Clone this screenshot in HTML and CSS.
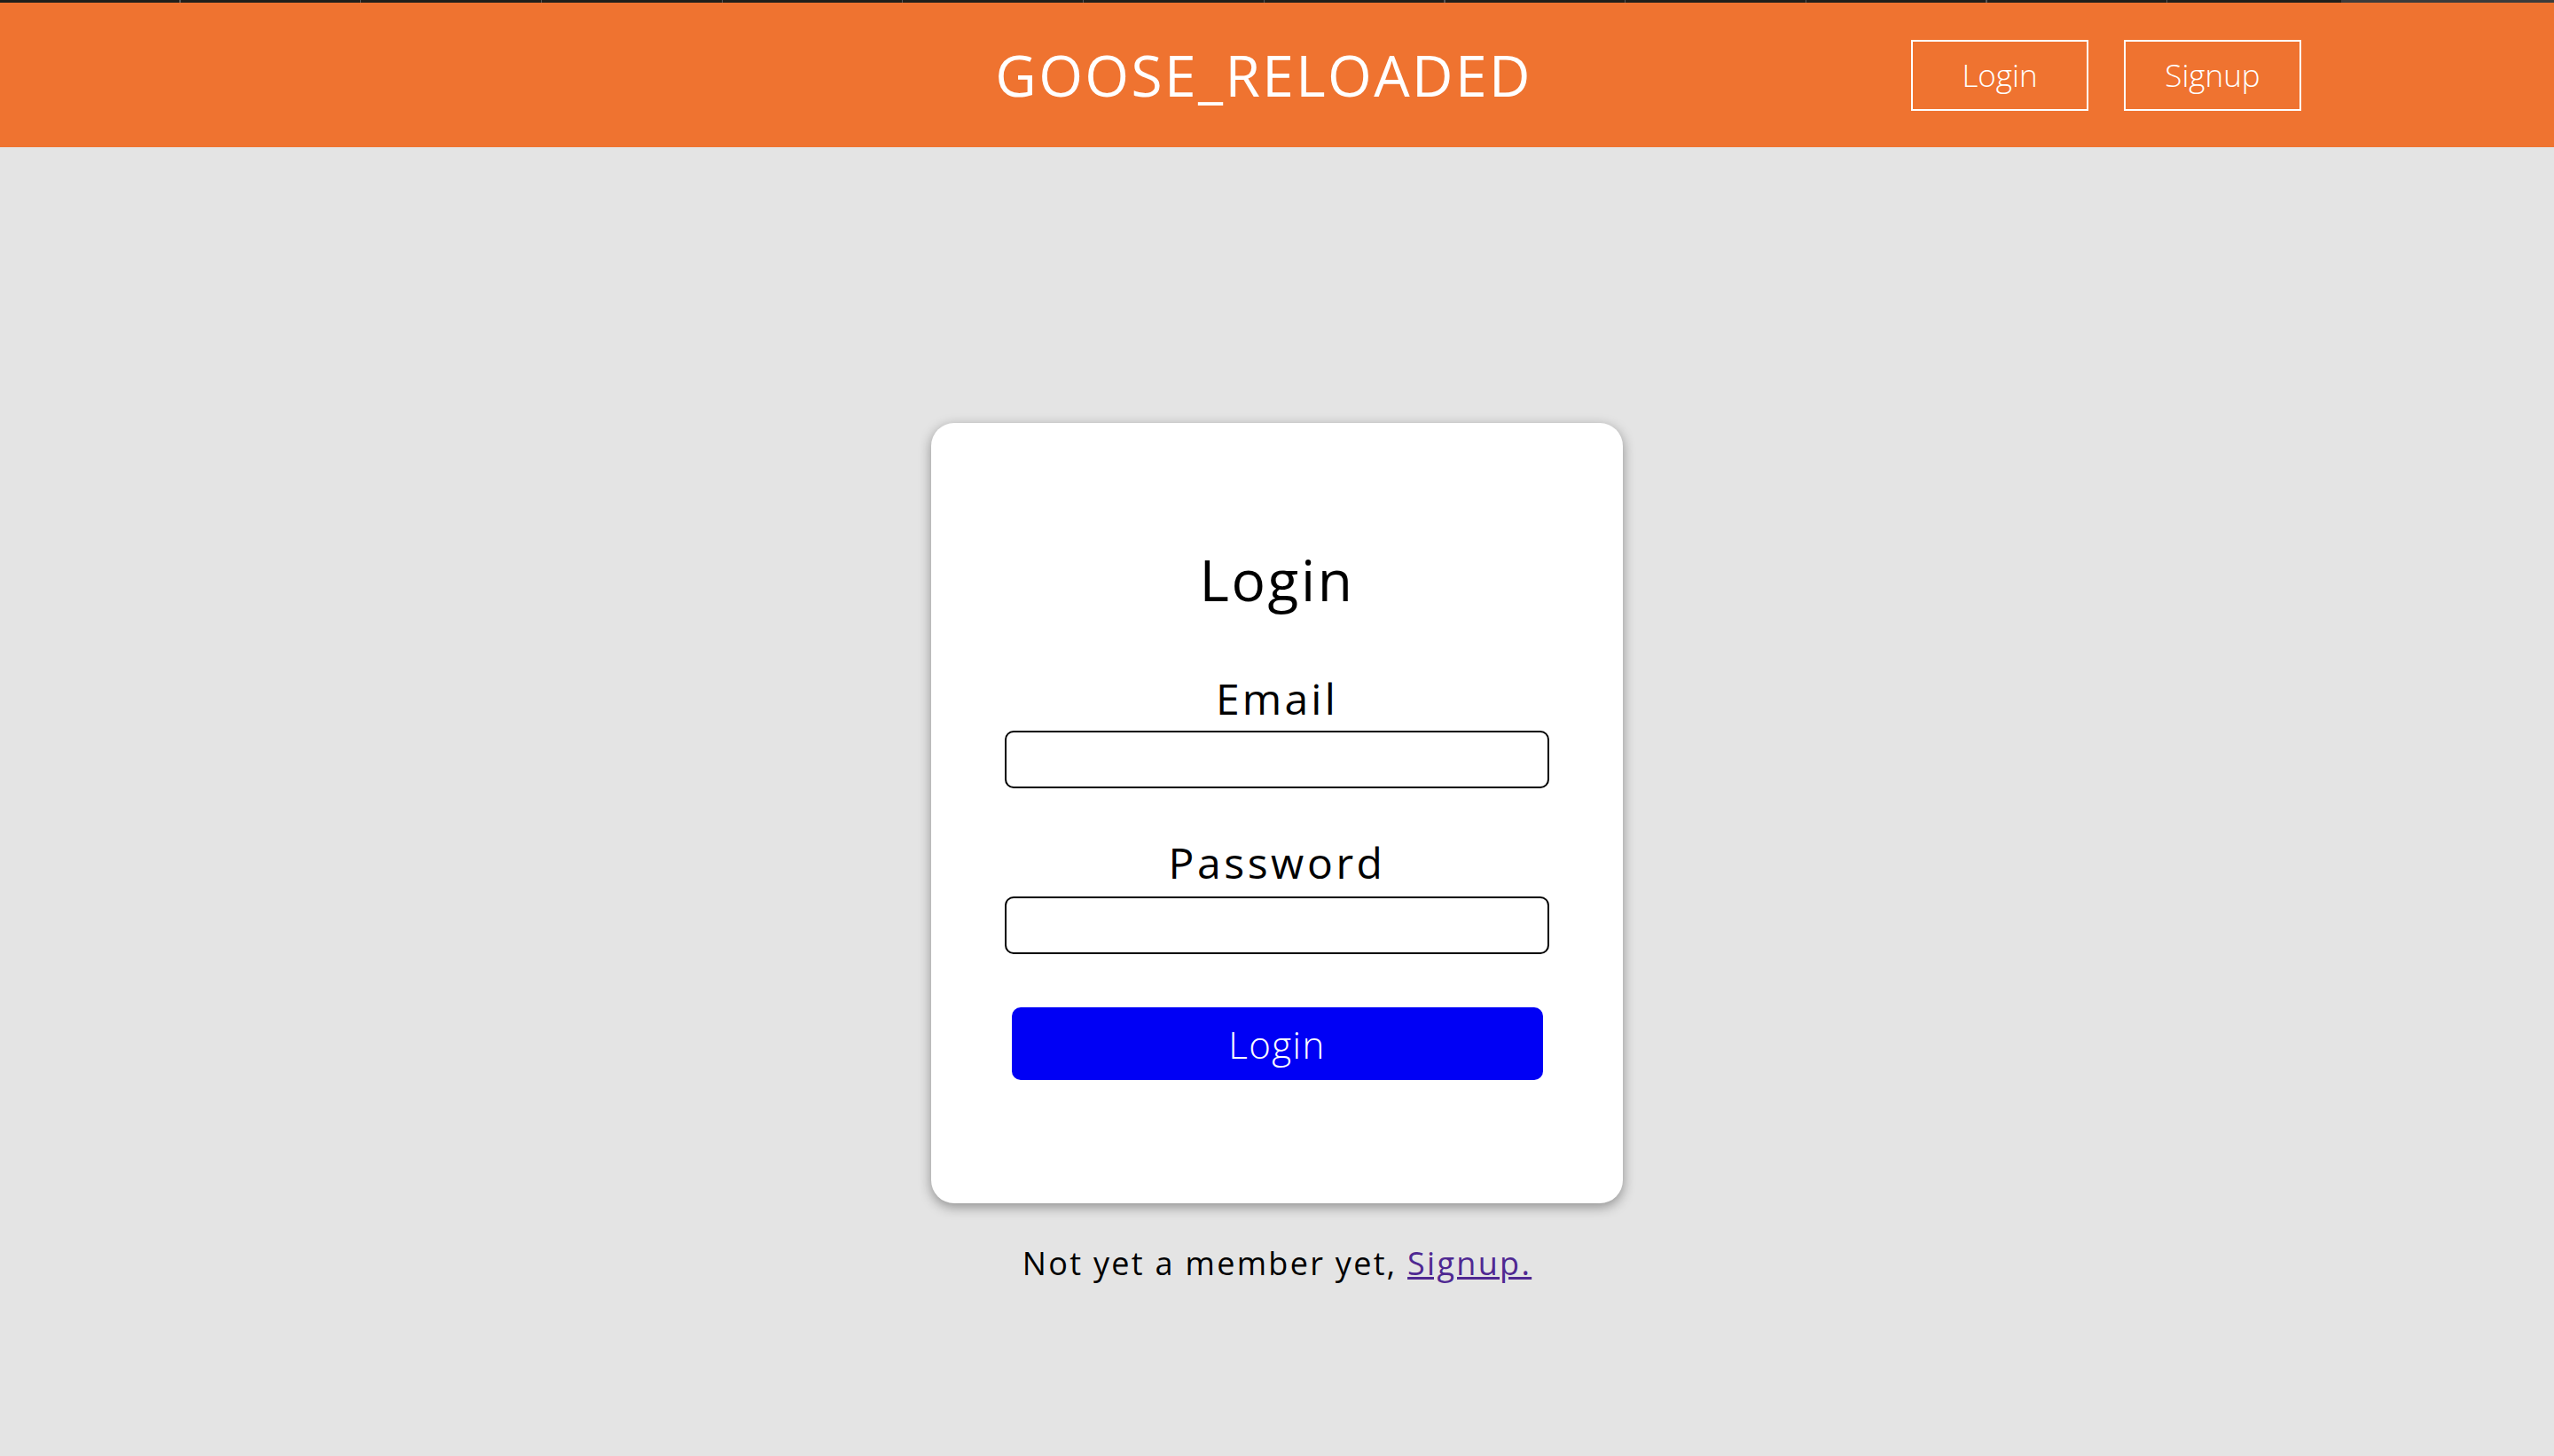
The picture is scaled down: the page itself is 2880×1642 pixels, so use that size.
FILE: index.html
```html
<!DOCTYPE html>
<html lang="en">
<head>
<meta charset="utf-8">
<title>GOOSE_RELOADED</title>
<link rel="stylesheet" href="styles.css">
</head>
<body>
<div class="topstrip"></div>
<header class="header">
  <div class="header-side"></div>
  <h1 class="brand">GOOSE_RELOADED</h1>
  <nav class="nav">
    <a class="nav-btn" href="#">Login</a>
    <a class="nav-btn" href="#">Signup</a>
  </nav>
</header>
<main class="main">
  <section class="card">
    <h2 class="card-title">Login</h2>
    <form class="form">
      <label class="label" for="email">Email</label>
      <input class="input" id="email" type="email">
      <label class="label label-pw" for="password">Password</label>
      <input class="input" id="password" type="password">
      <button class="submit" type="button">Login</button>
    </form>
  </section>
  <p class="footer-text">Not yet a member yet, <a class="link" href="#">Signup.</a></p>
</main>
</body>
</html>
```
FILE: styles.css
```css
html, body {
  margin: 0;
  padding: 0;
}
body {
  background: #e4e4e4;
  font-family: "Open Sans", "Noto Sans", sans-serif;
  color: #000;
  min-height: 1642px;
}
.topstrip {
  height: 3px;
  background:
    linear-gradient(to right, transparent 0, transparent 2640px, #3b3b3b 2640px),
    repeating-linear-gradient(to right, #1f1f1b 0, #1f1f1b 202.5px, #555 202.5px, #555 203.7px);
}
.header {
  height: 163px;
  background: #ef7330;
  display: grid;
  grid-template-columns: 1fr auto 1fr;
  align-items: center;
}
.brand {
  margin: 0;
  padding-right: 30px;
  font-size: 64px;
  font-weight: 400;
  line-height: 64px;
  color: #fff;
  letter-spacing: 2.4px;
}
.nav {
  display: flex;
  justify-content: flex-end;
  gap: 40px;
  padding-right: 285px;
}
.nav-btn {
  box-sizing: border-box;
  width: 200px;
  height: 80px;
  border: 2px solid #fff;
  color: #fff;
  text-decoration: none;
  font-size: 35px;
  font-weight: 300;
  display: flex;
  align-items: center;
  justify-content: center;
}
.main {
  display: flex;
  flex-direction: column;
  align-items: center;
  padding-top: 311px;
}
.card {
  box-sizing: border-box;
  width: 780px;
  height: 880px;
  background: #fff;
  border-radius: 26px;
  box-shadow: 0 4px 14px rgba(0, 0, 0, 0.38);
  padding-top: 145px;
  display: flex;
  flex-direction: column;
  align-items: center;
}
.card-title {
  margin: 0;
  font-size: 64px;
  line-height: 64px;
  font-weight: 400;
  letter-spacing: 2.6px;
}
.form {
  display: flex;
  flex-direction: column;
  align-items: center;
  margin-top: 78px;
}
.label {
  font-size: 48px;
  line-height: 48px;
  font-weight: 500;
  letter-spacing: 3.2px;
  margin-bottom: 12px;
}
.label-pw {
  margin-top: 60px;
  margin-bottom: 14px;
  letter-spacing: 3.6px;
}
.input {
  box-sizing: border-box;
  width: 614px;
  height: 65px;
  border: 2px solid #000;
  border-radius: 10px;
  background: #fff;
  margin: 0;
}
.submit {
  box-sizing: border-box;
  margin-top: 60px;
  width: 599px;
  height: 82px;
  border: none;
  border-radius: 10px;
  background: #0000f5;
  color: #fff;
  font-family: inherit;
  font-size: 42px;
  font-weight: 300;
  letter-spacing: 1.4px;
}
.footer-text {
  margin: 50px 0 0;
  font-size: 36px;
  line-height: 36px;
  font-weight: 400;
  letter-spacing: 2.3px;
}
.link {
  color: #4f2892;
}
```
